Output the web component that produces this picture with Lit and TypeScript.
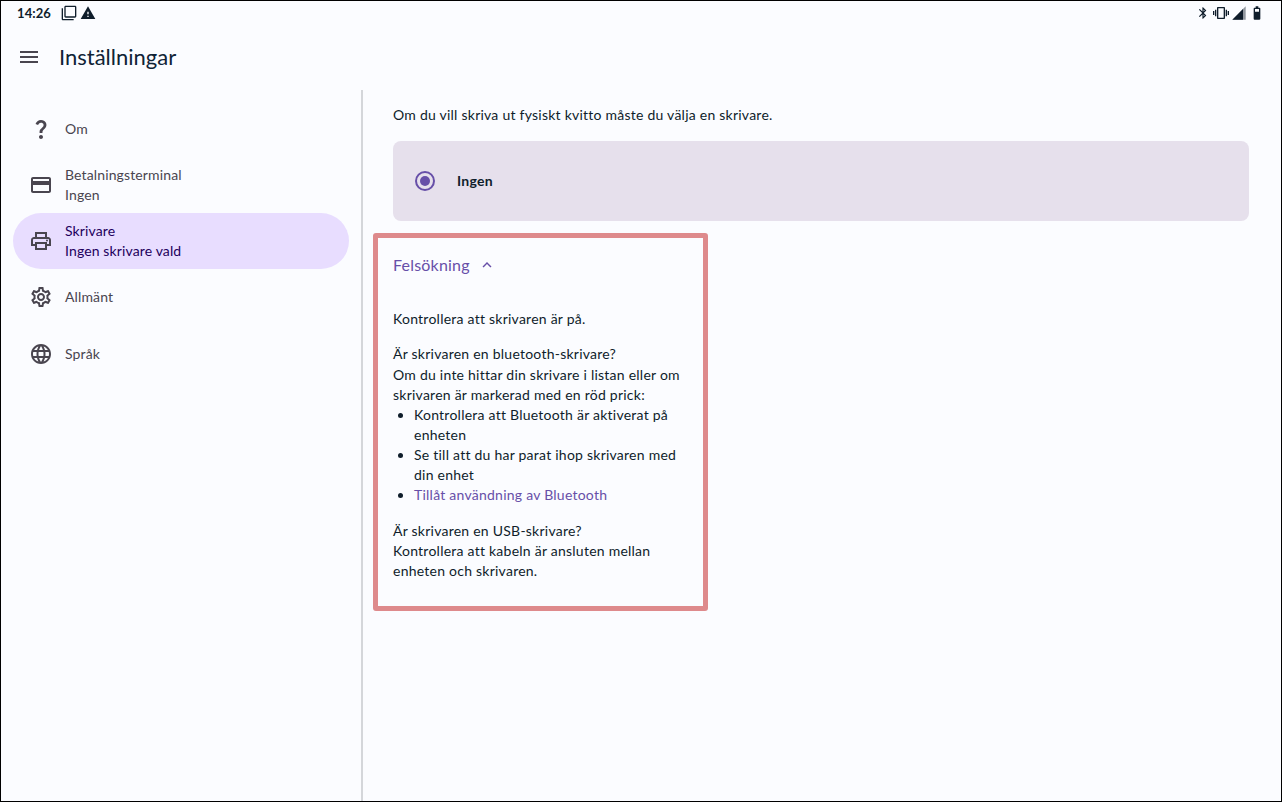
import { LitElement, html, css, svg } from "lit";
import { customElement } from "lit/decorators.js";

const ICONS: Record<string, string> = {
  help: "M11.07 12.85c.77-1.39 2.25-2.21 3.11-3.44.91-1.29.4-3.7-2.18-3.7-1.69 0-2.52 1.28-2.87 2.34L6.54 6.96C7.25 4.83 9.18 3 11.99 3c2.35 0 3.96 1.07 4.78 2.41.7 1.15 1.11 3.3.03 4.9-1.2 1.77-2.35 2.31-2.97 3.45-.25.46-.35.76-.35 2.24h-2.89c-.01-.78-.13-2.05.48-3.15zM14 20c0 1.1-.9 2-2 2s-2-.9-2-2 .9-2 2-2 2 .9 2 2z",
  card: "M20 4H4c-1.11 0-1.99.89-1.99 2L2 18c0 1.11.89 2 2 2h16c1.11 0 2-.89 2-2V6c0-1.11-.89-2-2-2zm0 14H4v-6h16v6zm0-10H4V6h16v2z",
  print: "M19 8h-1V3H6v5H5c-1.66 0-3 1.34-3 3v6h4v4h12v-4h4v-6c0-1.66-1.34-3-3-3zM8 5h8v3H8V5zm8 12v2H8v-4h8v2zm2-2v-2H6v2H4v-4c0-.55.45-1 1-1h14c.55 0 1 .45 1 1v4h-2zM18 10.5a1 1 0 1 1 0 2 1 1 0 0 1 0-2z",
  gear: "M19.43 12.98c.04-.32.07-.64.07-.98 0-.34-.03-.66-.07-.98l2.11-1.65c.19-.15.24-.42.12-.64l-2-3.46c-.09-.16-.26-.25-.44-.25-.06 0-.12.01-.17.03l-2.49 1c-.52-.4-1.08-.73-1.69-.98l-.38-2.65C14.46 2.18 14.25 2 14 2h-4c-.25 0-.46.18-.49.42l-.38 2.65c-.61.25-1.17.59-1.69.98l-2.49-1c-.06-.02-.12-.03-.18-.03-.17 0-.34.09-.43.25l-2 3.46c-.13.22-.07.49.12.64l2.11 1.65c-.04.32-.07.65-.07.98 0 .33.03.66.07.98l-2.11 1.65c-.19.15-.24.42-.12.64l2 3.46c.09.16.26.25.44.25.06 0 .12-.01.17-.03l2.49-1c.52.4 1.08.73 1.69.98l.38 2.65c.03.24.24.42.49.42h4c.25 0 .46-.18.49-.42l.38-2.65c.61-.25 1.17-.59 1.69-.98l2.49 1c.06.02.12.03.18.03.17 0 .34-.09.43-.25l2-3.46c.12-.22.07-.49-.12-.64l-2.11-1.65zm-1.98-1.71c.04.31.05.52.05.73 0 .21-.02.43-.05.73l-.14 1.13.89.7 1.08.84-.7 1.21-1.27-.51-1.04-.42-.9.68c-.43.32-.84.56-1.25.73l-1.06.43-.16 1.13-.2 1.35h-1.4l-.19-1.35-.16-1.13-1.06-.43c-.43-.18-.83-.41-1.23-.71l-.91-.7-1.06.43-1.27.51-.7-1.21 1.08-.84.89-.7-.14-1.13c-.03-.31-.05-.54-.05-.74s.02-.43.05-.73l.14-1.13-.89-.7-1.08-.84.7-1.21 1.27.51 1.04.42.9-.68c.43-.32.84-.56 1.25-.73l1.06-.43.16-1.13.2-1.35h1.39l.19 1.35.16 1.13 1.06.43c.43.18.83.41 1.23.71l.91.7 1.06-.43 1.27-.51.7 1.21-1.07.85-.89.7.14 1.13zM12 8c-2.21 0-4 1.79-4 4s1.79 4 4 4 4-1.79 4-4-1.79-4-4-4zm0 6c-1.1 0-2-.9-2-2s.9-2 2-2 2 .9 2 2-.9 2-2 2z",
  globe: "M11.99 2C6.47 2 2 6.48 2 12s4.47 10 9.99 10C17.52 22 22 17.52 22 12S17.52 2 11.99 2zm6.93 6h-2.95c-.32-1.25-.78-2.45-1.38-3.56 1.84.63 3.37 1.91 4.33 3.56zM12 4.04c.83 1.2 1.48 2.53 1.91 3.96h-3.82c.43-1.43 1.08-2.76 1.91-3.96zM4.26 14C4.1 13.36 4 12.69 4 12s.1-1.36.26-2h3.38c-.08.66-.14 1.32-.14 2 0 .68.06 1.34.14 2H4.26zm.82 2h2.95c.32 1.25.78 2.45 1.38 3.56-1.84-.63-3.37-1.9-4.33-3.56zm2.95-8H5.08c.96-1.66 2.49-2.93 4.33-3.56C8.81 5.55 8.35 6.75 8.03 8zM12 19.96c-.83-1.2-1.48-2.53-1.91-3.96h3.82c-.43 1.43-1.08 2.76-1.91 3.96zM14.34 14H9.66c-.09-.66-.16-1.32-.16-2 0-.68.07-1.35.16-2h4.68c.09.65.16 1.32.16 2 0 .68-.07 1.34-.16 2zm.25 5.56c.6-1.11 1.06-2.31 1.38-3.56h2.95c-.96 1.65-2.49 2.93-4.33 3.56zM16.36 14c.08-.66.14-1.32.14-2 0-.68-.06-1.34-.14-2h3.38c.16.64.26 1.31.26 2s-.1 1.36-.26 2h-3.38z",
  menu: "M3 18h18v-2H3v2zm0-5h18v-2H3v2zm0-7v2h18V6H3z",
  copy: "M3 5H1v16c0 1.1.9 2 2 2h16v-2H3V5zm18-4H7c-1.1 0-2 .9-2 2v14c0 1.1.9 2 2 2h14c1.1 0 2-.9 2-2V3c0-1.1-.9-2-2-2zm0 16H7V3h14v14z",
  warn: "M1 21h22L12 2 1 21zm12-3h-2v-2h2v2zm0-4h-2v-4h2v4z",
  bt: "M17.71 7.71L12 2h-1v7.59L6.41 5 5 6.41 10.59 12 5 17.59 6.41 19 11 14.41V22h1l5.71-5.71-4.3-4.29 4.3-4.29zM13 5.83l1.88 1.88L13 9.59V5.83zm1.88 10.46L13 18.17v-3.76l1.88 1.88z",
  vib: "M0 15h2V9H0v6zm3 2h2V7H3v10zm19-8v6h2V9h-2zm-3 8h2V7h-2v10zM16.5 3h-9C6.67 3 6 3.67 6 4.5v15c0 .83.67 1.5 1.5 1.5h9c.83 0 1.5-.67 1.5-1.5v-15c0-.83-.67-1.5-1.5-1.5zM16 19H8V5h8v14z",
  battery: "M15.67 4H14V2h-4v2H8.33C7.6 4 7 4.6 7 5.33v15.33C7 21.4 7.6 22 8.33 22h7.33c.74 0 1.34-.6 1.34-1.33V5.33C17 4.6 16.4 4 15.67 4zM15 6v4H9V6h6z",
  up: "M7.41 15.41 12 10.83l4.59 4.58L18 14l-6-6-6 6z",
};

const icon = (name: string, size = 24) => html`<svg class="ic" width=${size} height=${size} viewBox="0 0 24 24">${svg`<path d=${ICONS[name]} fill="currentColor" fill-rule="evenodd"></path>`}</svg>`;

const signal = html`<svg class="ic" width="16" height="16" viewBox="0 0 24 24">${svg`<path d="M22 2v20H2z" fill="currentColor" opacity=".45"></path><path d="M18 6v16H2z" fill="currentColor"></path>`}</svg>`;

const NAV = [
  { i: "help", t: ["Om"] },
  { i: "card", t: ["Betalningsterminal", "Ingen"] },
  { i: "print", t: ["Skrivare", "Ingen skrivare vald"], on: true },
  { i: "gear", t: ["Allmänt"] },
  { i: "globe", t: ["Språk"] },
];

@customElement("app-root")
export class AppRoot extends LitElement {
  static styles = css`
    :host {
      display: flex;
      flex-direction: column;
      box-sizing: border-box;
      width: 1282px;
      height: 802px;
      border: 1px solid #000;
      background: #fbfcff;
      font-family: Lato, "Liberation Sans", sans-serif;
      font-size: 14px;
      line-height: 20px;
      color: #0f1d2b;
      overflow: hidden;
    }
    .ic { display: block; flex: none; }
    .status {
      display: flex;
      align-items: center;
      height: 24px;
      padding: 0 16px;
      font-size: 13px;
      font-weight: 700;
    }
    .status .left { display: flex; align-items: center; gap: 3px; }
    .status .time { margin-right: 7px; letter-spacing: 0.1px; }
    .status .right { display: flex; align-items: center; margin-left: auto; gap: 2px; }
    .status .right .ic:first-child { margin-right: 1px; }
    .appbar {
      display: flex;
      align-items: center;
      height: 63px;
      padding-bottom: 2px;
      padding-left: 16px;
      gap: 18px;
      font-size: 22px;
      color: #0f2336;
    }
    .appbar .ic { color: #49454f; }
    .body { display: flex; flex: 1; min-height: 0; }
    .side {
      box-sizing: border-box;
      width: 362px;
      flex: none;
      border-right: 2px solid #d4d6da;
      padding: 11px 12px 0 12px;
      letter-spacing: 0.13px;
      font-variant-ligatures: common-ligatures;
    }
    .item {
      display: flex;
      align-items: center;
      height: 56px;
      padding-left: 16px;
      gap: 12px;
      border-radius: 28px;
      color: #49454f;
    }
    .item:last-child { margin-top: 1px; }
    .item.on { background: #e8ddff; color: #22005d; }
    .item.on .ic { color: #49454f; }
    .main {
      position: relative;
      flex: 1;
      padding: 15px 32px 0 30px;
      letter-spacing: 0.24px;
      font-variant-ligatures: common-ligatures;
    }
    .intro { margin: 0 0 16px; }
    .radio {
      display: flex;
      align-items: center;
      height: 80px;
      padding-left: 22px;
      gap: 22px;
      border-radius: 8px;
      background: #e6e0ec;
      font-weight: 700;
    }
    .dot {
      box-sizing: border-box;
      display: flex;
      align-items: center;
      justify-content: center;
      width: 20px;
      height: 20px;
      border: 2px solid #674fa8;
      border-radius: 50%;
    }
    .dot i { width: 10px; height: 10px; border-radius: 50%; background: #674fa8; }
    .trouble { width: 296px; }
    .head {
      display: flex;
      align-items: center;
      gap: 8px;
      height: 24px;
      margin-top: 32px;
      margin-bottom: 32px;
      font-size: 16px;
      letter-spacing: 0.2px;
      color: #674fa8;
    }
    .trouble p { margin: 0; }
    .checks { margin-top: 15px; margin-bottom: 1px; }
    .usb { margin-top: 16px; }
    ul { margin: 0; padding-left: 21px; }
    a { color: #674fa8; text-decoration: none; }
    .mark {
      position: absolute;
      left: 10px;
      top: 143px;
      box-sizing: border-box;
      width: 335px;
      height: 378px;
      border: 5px solid #de8a8c;
      border-radius: 3px;
    }
  `;

  render() {
    return html`
      <div class="status">
        <div class="left"><span class="time">14:26</span>${icon("copy", 16)}${icon("warn", 16)}</div>
        <div class="right">${icon("bt", 14)}${icon("vib", 16)}${signal}${icon("battery", 16)}</div>
      </div>
      <div class="appbar">${icon("menu")}<span>Inställningar</span></div>
      <div class="body">
        <nav class="side">
          ${NAV.map(n => html`<div class="item ${n.on ? "on" : ""}">${icon(n.i)}<div>${n.t.map(l => html`<div>${l}</div>`)}</div></div>`)}
        </nav>
        <main class="main">
          <p class="intro">Om du vill skriva ut fysiskt kvitto måste du välja en skrivare.</p>
          <div class="radio"><span class="dot"><i></i></span><span>Ingen</span></div>
          <section class="trouble">
            <div class="head"><span>Felsökning</span>${icon("up", 18)}</div>
            <p>Kontrollera att skrivaren är på.</p>
            <div class="checks">Är skrivaren en bluetooth-skrivare?</div>
            <div>Om du inte hittar din skrivare i listan eller om skrivaren är markerad med en röd prick:</div>
            <ul>
              <li>Kontrollera att Bluetooth är aktiverat på enheten</li>
              <li>Se till att du har parat ihop skrivaren med din enhet</li>
              <li><a>Tillåt användning av Bluetooth</a></li>
            </ul>
            <div class="usb">Är skrivaren en USB-skrivare?</div>
            <div>Kontrollera att kabeln är ansluten mellan enheten och skrivaren.</div>
          </section>
          <div class="mark"></div>
        </main>
      </div>
    `;
  }
}
